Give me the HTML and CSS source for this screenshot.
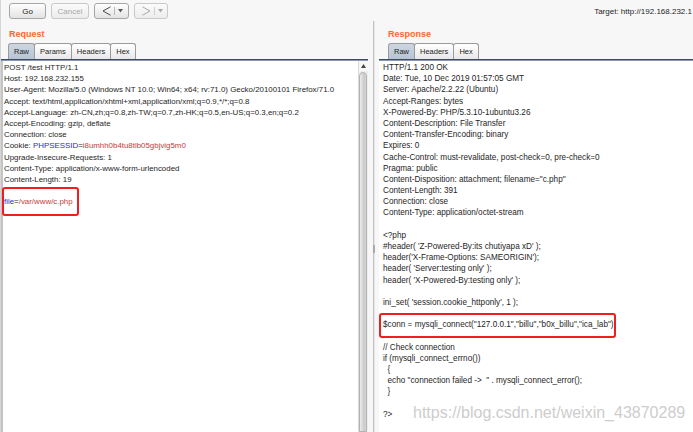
FILE: index.html
```html
<!DOCTYPE html>
<html lang="en">
<head>
<meta charset="utf-8">
<title>Repeater</title>
<link rel="stylesheet" href="styles.css">
</head>
<body>
<div class="app">
  <header class="toolbar">
    <button class="btn btn-go">Go</button>
    <button class="btn btn-cancel" disabled>Cancel</button>
    <button class="btn btn-nav">
      <svg class="chev" viewBox="0 0 9 10" width="9" height="10"><path d="M8.5 0.8 L1 5 L8.5 9.2"/></svg>
      <span class="sep"></span>
      <svg class="drop" viewBox="0 0 5 4" width="5" height="4"><path d="M0 0 H5 L2.5 3.5Z"/></svg>
    </button>
    <button class="btn btn-nav is-disabled">
      <svg class="chev" viewBox="0 0 9 10" width="9" height="10"><path d="M0.5 0.8 L8 5 L0.5 9.2"/></svg>
      <span class="sep"></span>
      <svg class="drop" viewBox="0 0 5 4" width="5" height="4"><path d="M0 0 H5 L2.5 3.5Z"/></svg>
    </button>
    <div class="target">Target: http://192.168.232.1</div>
  </header>

  <main class="main">
    <section class="pane pane-req">
      <h2 class="pane-title">Request</h2>
      <nav class="tabs">
        <span class="tab active">Raw</span>
        <span class="tab">Params</span>
        <span class="tab">Headers</span>
        <span class="tab">Hex</span>
      </nav>
      <div class="tab-rule"></div>
      <div class="editor-wrap">
        <div class="editor"><div class="ln">POST /test HTTP/1.1</div><div class="ln">Host: 192.168.232.155</div><div class="ln">User-Agent: Mozilla/5.0 (Windows NT 10.0; Win64; x64; rv:71.0) Gecko/20100101 Firefox/71.0</div><div class="ln">Accept: text/html,application/xhtml+xml,application/xml;q=0.9,*/*;q=0.8</div><div class="ln">Accept-Language: zh-CN,zh;q=0.8,zh-TW;q=0.7,zh-HK;q=0.5,en-US;q=0.3,en;q=0.2</div><div class="ln">Accept-Encoding: gzip, deflate</div><div class="ln">Connection: close</div><div class="ln">Cookie: <span class="k">PHPSESSID</span>=<span class="v">i8umhh0b4tu8tlb05gbjvig5m0</span></div><div class="ln">Upgrade-Insecure-Requests: 1</div><div class="ln">Content-Type: application/x-www-form-urlencoded</div><div class="ln">Content-Length: 19</div><div class="ln"> </div><div class="ln"><span class="k">file</span>=<span class="v">/var/www/c.php</span></div></div>
        <div class="scrollbar">
          <div class="sb-up"><svg viewBox="0 0 5 4" width="5" height="4"><path d="M0 4 H5 L2.5 0Z"/></svg></div>
          <div class="sb-thumb"></div>
        </div>
        <div class="mark mark-req"></div>
      </div>
    </section>

    <div class="splitter"><div class="split-line"><span class="grip"></span></div></div>

    <section class="pane pane-res">
      <h2 class="pane-title">Response</h2>
      <nav class="tabs">
        <span class="tab active">Raw</span>
        <span class="tab">Headers</span>
        <span class="tab">Hex</span>
      </nav>
      <div class="tab-rule"></div>
      <div class="editor-wrap">
        <div class="editor"><div class="ln">HTTP/1.1 200 OK</div><div class="ln">Date: Tue, 10 Dec 2019 01:57:05 GMT</div><div class="ln">Server: Apache/2.2.22 (Ubuntu)</div><div class="ln">Accept-Ranges: bytes</div><div class="ln">X-Powered-By: PHP/5.3.10-1ubuntu3.26</div><div class="ln">Content-Description: File Transfer</div><div class="ln">Content-Transfer-Encoding: binary</div><div class="ln">Expires: 0</div><div class="ln">Cache-Control: must-revalidate, post-check=0, pre-check=0</div><div class="ln">Pragma: public</div><div class="ln">Content-Disposition: attachment; filename="c.php"</div><div class="ln">Content-Length: 391</div><div class="ln">Connection: close</div><div class="ln">Content-Type: application/octet-stream</div><div class="ln"> </div><div class="ln">&lt;?php</div><div class="ln">#header( 'Z-Powered-By:its chutiyapa xD' );</div><div class="ln">header('X-Frame-Options: SAMEORIGIN');</div><div class="ln">header( 'Server:testing only' );</div><div class="ln">header( 'X-Powered-By:testing only' );</div><div class="ln"> </div><div class="ln">ini_set( 'session.cookie_httponly', 1 );</div><div class="ln"> </div><div class="ln">$conn = mysqli_connect("127.0.0.1","billu","b0x_billu","ica_lab");</div><div class="ln"> </div><div class="ln">// Check connection</div><div class="ln">if (mysqli_connect_errno())</div><div class="ln">  {</div><div class="ln">  echo "connection failed ->  " . mysqli_connect_error();</div><div class="ln">  }</div><div class="ln"> </div><div class="ln">?&gt;</div></div>
        <div class="mark mark-res"></div>
      </div>
    </section>
  </main>

  <div class="watermark">https://blog.csdn.net/weixin_43870289</div>
</div>
</body>
</html>
```

FILE: styles.css
```css
* { box-sizing: border-box; margin: 0; padding: 0; }

html, body {
  width: 693px;
  height: 432px;
  overflow: hidden;
}

body {
  background: #f7f7f7;
  font-family: "Liberation Sans", Arial, sans-serif;
  color: #222;
}

.app {
  position: relative;
  height: 432px;
  border-left: 1px solid #d6d6d6;
  overflow: hidden;
}

/* ---------- toolbar ---------- */
.toolbar {
  height: 21px;
  display: flex;
  align-items: flex-start;
  padding: 3px 0 0 8px;
}

.btn {
  height: 16px;
  display: flex;
  align-items: center;
  justify-content: center;
  font-family: inherit;
  font-size: 8px;
  color: #1e1e1e;
  border: 1px solid #a6a6a6;
  border-radius: 3px;
  background: linear-gradient(#fefefe, #e3e3e3);
}

.btn + .btn { margin-left: 5px; }

.btn-go { width: 37px; }

.btn-cancel {
  width: 38px;
  color: #a8a8a8;
  border-color: #c9c9c9;
  background: linear-gradient(#fbfbfb, #ececec);
}

.btn-nav {
  width: 35px;
  gap: 3px;
  padding-left: 2px;
}

.btn-nav .chev {
  fill: none;
  stroke: #4a4a4a;
  stroke-width: 1;
}

.btn-nav .sep {
  width: 1px;
  height: 8px;
  background: #b8b8b8;
}

.btn-nav .drop { fill: #5a5a5a; }

.btn-nav.is-disabled {
  width: 34px;
  border-color: #c9c9c9;
  background: linear-gradient(#fbfbfb, #ececec);
}

.btn-nav.is-disabled .chev { stroke: #a8a8a8; }
.btn-nav.is-disabled .drop { fill: #a8a8a8; }
.btn-nav.is-disabled .sep { background: #d0d0d0; }

.target {
  margin-left: auto;
  margin-right: 1px;
  line-height: 17px;
  font-size: 8px;
  color: #1f1f1f;
  white-space: nowrap;
}

/* ---------- panes ---------- */
.main {
  display: flex;
  height: 411px;
}

.pane {
  display: flex;
  flex-direction: column;
}

.pane-req { width: 367px; }
.pane-res { flex: 1; min-width: 0; }

.pane-title {
  height: 22px;
  padding: 7px 0 0 8px;
  font-size: 9px;
  line-height: 12px;
  font-weight: bold;
  color: #ff6633;
}

.pane-res .pane-title { padding-left: 9px; }

.tabs {
  display: flex;
  align-items: flex-end;
  height: 16px;
  padding-left: 7px;
}

.pane-res .tabs { padding-left: 9px; }

.tab {
  height: 16px;
  padding: 0 5px;
  font-size: 7.5px;
  line-height: 15px;
  color: #1e1e1e;
  border: 1px solid #9b9b9b;
  border-bottom: none;
  border-radius: 3px 3px 0 0;
  background: linear-gradient(#ffffff, #e8e8e8);
  margin-right: -1px;
}

.tab.active {
  background: linear-gradient(#cdd7e2, #b7c4d2);
}

.tab-rule {
  height: 2px;
  background: linear-gradient(#3e4b67 50%, #8c98ae 50%);
}

.editor-wrap {
  flex: 1;
  display: flex;
  position: relative;
  background: #fff;
  min-height: 0;
}

.pane-req .editor-wrap { border-left: 2px solid #c4c4c4; }

.editor {
  flex: 1;
  min-width: 0;
  overflow: hidden;
  padding: 1px 0 0 1px;
  font-size: 7.9px;
  line-height: 11.2px;
  white-space: pre;
  color: #262626;
}

.pane-res .editor {
  padding-left: 4px;
  font-size: 8.2px;
}

.ln { height: 11.2px; }

.k { color: #2a2ad8; }
.v { color: #c43a3a; }

/* scrollbar */
.scrollbar {
  width: 10px;
  display: flex;
  flex-direction: column;
  background: #eeeeee;
  border-left: 1px solid #dadada;
}

.sb-up {
  height: 10px;
  display: flex;
  align-items: center;
  justify-content: center;
  background: #f6f6f6;
}

.sb-up svg { fill: #444; }

.sb-thumb {
  flex: 1;
  margin: 1px 1px 0 0;
  border: 1px solid #b2b2b2;
  border-radius: 4px 4px 0 0;
  background: linear-gradient(to right, #ececec, #cacaca 70%, #d6d6d6);
}

/* splitter */
.splitter {
  width: 11px;
  display: flex;
  padding-left: 5px;
}

.split-line {
  width: 2px;
  border-left: 1px solid #c3c3c3;
  background: #e7e7e7;
  position: relative;
}

.grip {
  position: absolute;
  left: -1px;
  top: 224px;
  width: 2px;
  height: 8px;
  background: #a9a9a9;
}

/* red annotation boxes */
.mark {
  position: absolute;
  border: 2px solid #f21d1d;
  border-radius: 3px;
}

.mark-req {
  left: -1px;
  top: 126px;
  width: 77px;
  height: 29px;
}

.mark-res {
  left: 0;
  top: 252px;
  width: 237px;
  height: 25px;
}

.watermark {
  position: absolute;
  left: 412px;
  top: 404px;
  font-size: 16px;
  line-height: 18px;
  color: #cdcdcd;
  white-space: nowrap;
}
```
